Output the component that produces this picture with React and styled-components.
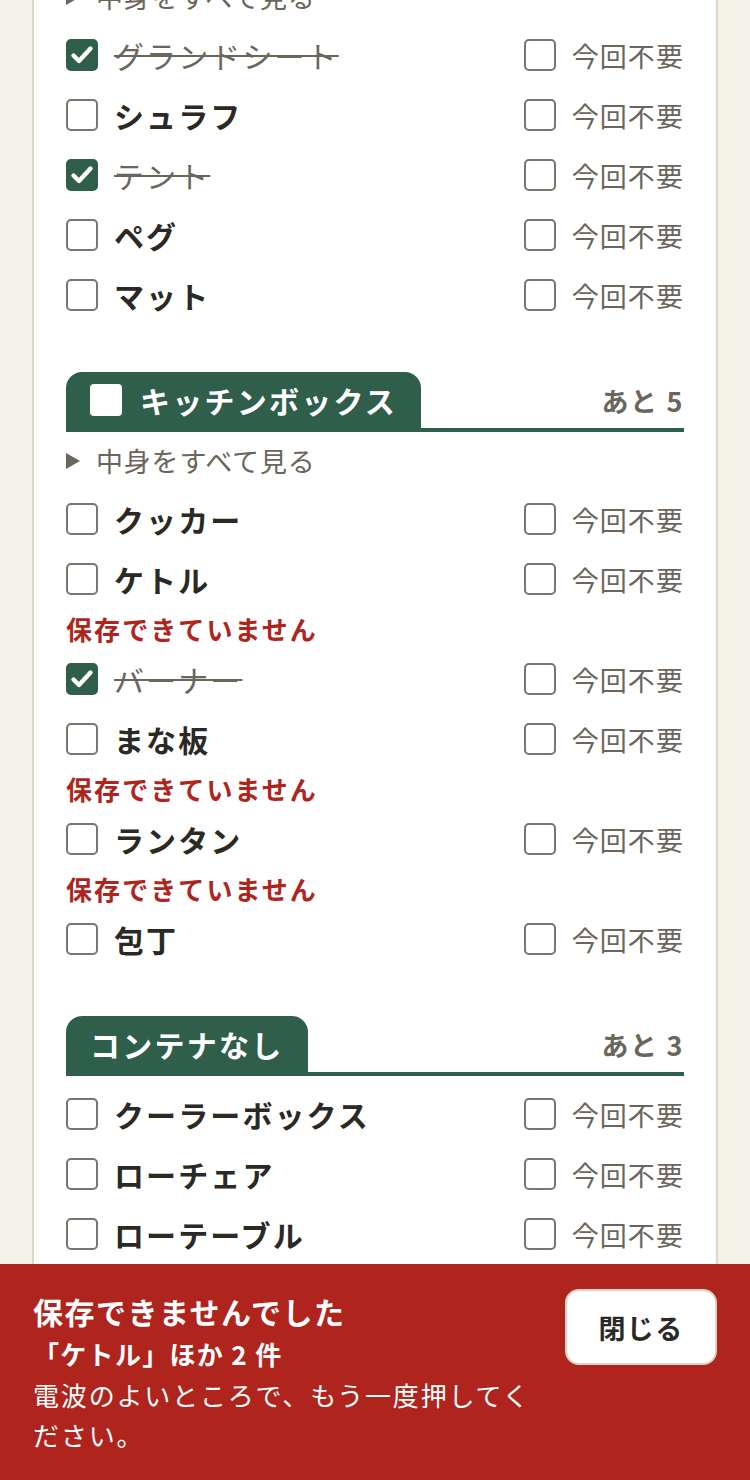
import styled, { createGlobalStyle } from "styled-components";

const GlobalStyle = createGlobalStyle`
  body {
    margin: 0;
    background: #f4f1e9;
    font-family: "Noto Sans CJK JP", "Noto Sans", sans-serif;
  }
`;

const green = "#2f5e4a";
const grey = "#6b665c";
const red = "#b0241e";

const Page = styled.div`
  padding: 0 32px;
`;

const Card = styled.div`
  margin-top: -124px;
  background: #fff;
  border-left: 2px solid #ddd8cb;
  border-right: 2px solid #ddd8cb;
  padding: 32px 32px 260px;
  display: flex;
  flex-direction: column;
  gap: 47px;
`;

const Section = styled.section`
  display: flex;
  flex-direction: column;
`;

const Header = styled.div`
  display: flex;
  align-items: center;
  justify-content: space-between;
  border-bottom: 4px solid ${green};
  margin-bottom: 8px;
`;

const Tab = styled.div`
  height: 56px;
  display: flex;
  align-items: center;
  gap: 18px;
  padding: 0 24px;
  background: ${green};
  border-radius: 16px 16px 0 0;
  color: #fff;
  font-size: 30px;
  font-weight: 700;
  letter-spacing: 0.075em;
`;

const TabBox = styled.span`
  width: 32px;
  height: 32px;
  border-radius: 4px;
  background: #fff;
`;

const Remaining = styled.span`
  color: ${grey};
  font-size: 27px;
  font-weight: 700;
  letter-spacing: 0.06em;
`;

const Expander = styled.div`
  display: flex;
  align-items: center;
  gap: 16px;
  padding: 4px 0 11px;
  line-height: 34px;
  color: ${grey};
  font-size: 27px;
  letter-spacing: 0.03em;
`;

const Triangle = styled.span`
  width: 0;
  height: 0;
  border-top: 8px solid transparent;
  border-bottom: 8px solid transparent;
  border-left: 14px solid ${grey};
`;

const Row = styled.div`
  height: 60px;
  display: flex;
  align-items: center;
  justify-content: space-between;
`;

const Label = styled.label`
  display: flex;
  align-items: center;
  gap: 16px;
`;

const Box = styled.span`
  box-sizing: border-box;
  width: 32px;
  height: 32px;
  border-radius: 5px;
  border: 2px solid ${(p) => (p.$checked ? green : "#7a766e")};
  background: ${(p) => (p.$checked ? green : "#fff")};
  display: flex;
  align-items: center;
  justify-content: center;
`;

const Name = styled.span`
  font-size: 30px;
  letter-spacing: 0.07em;
  line-height: 1;
  color: ${(p) => (p.$done ? grey : "#2a2926")};
  font-weight: ${(p) => (p.$done ? 400 : 700)};
  text-decoration: ${(p) => (p.$done ? "line-through" : "none")};
  text-decoration-thickness: 2px;
`;

const Skip = styled.span`
  font-size: 27px;
  color: ${grey};
  letter-spacing: 0.04em;
  line-height: 1;
`;

const ErrorText = styled.div`
  height: 40px;
  line-height: 40px;
  color: ${red};
  font-size: 26px;
  font-weight: 700;
  letter-spacing: 0.08em;
`;

const Toast = styled.div`
  position: fixed;
  left: 0;
  right: 0;
  bottom: 0;
  height: 216px;
  box-sizing: border-box;
  background: ${red};
  color: #fff;
  padding: 25px 33px;
  display: flex;
  align-items: flex-start;
  gap: 24px;
`;

const ToastBody = styled.div`
  flex: 1;
`;

const ToastTitle = styled.div`
  font-size: 30px;
  font-weight: 700;
  line-height: 44px;
  letter-spacing: 0.05em;
`;

const ToastSub = styled.div`
  font-size: 26px;
  font-weight: 700;
  line-height: 42px;
  letter-spacing: 0.05em;
`;

const ToastText = styled.div`
  font-size: 26px;
  line-height: 40px;
  letter-spacing: 0.07em;
`;

const CloseButton = styled.button`
  flex: none;
  width: 152px;
  height: 76px;
  box-sizing: border-box;
  background: #fff;
  border: 2px solid #d9d3c3;
  border-radius: 14px;
  font-family: inherit;
  font-size: 27px;
  font-weight: 700;
  color: #2a2926;
  letter-spacing: 0.05em;
`;

const Check = () => (
  <svg width="24" height="24" viewBox="0 0 24 24">
    <path d="M3.5 12.5l5.5 5.5L20.5 5.5" fill="none" stroke="#fff" strokeWidth="4.4" strokeLinecap="round" strokeLinejoin="round" />
  </svg>
);

const sections = [
  {
    title: "テントバッグ",
    box: true,
    left: 2,
    expander: true,
    items: [
      { name: "グランドシート", done: true },
      { name: "シュラフ" },
      { name: "テント", done: true },
      { name: "ペグ" },
      { name: "マット" },
    ],
  },
  {
    title: "キッチンボックス",
    box: true,
    left: 5,
    expander: true,
    items: [
      { name: "クッカー" },
      { name: "ケトル", error: true },
      { name: "バーナー", done: true },
      { name: "まな板", error: true },
      { name: "ランタン", error: true },
      { name: "包丁" },
    ],
  },
  {
    title: "コンテナなし",
    left: 3,
    items: [
      { name: "クーラーボックス" },
      { name: "ローチェア" },
      { name: "ローテーブル" },
      { name: "焚き火台" },
    ],
  },
];

const Item = ({ name, done, error }) => (
  <>
    <Row>
      <Label>
        <Box $checked={done}>{done && <Check />}</Box>
        <Name $done={done}>{name}</Name>
      </Label>
      <Label>
        <Box />
        <Skip>今回不要</Skip>
      </Label>
    </Row>
    {error && <ErrorText>保存できていません</ErrorText>}
  </>
);

export default function App() {
  return (
    <Page>
      <GlobalStyle />
      <Card>
        {sections.map((s) => (
          <Section key={s.title}>
            <Header>
              <Tab>
                {s.box && <TabBox />}
                {s.title}
              </Tab>
              <Remaining>あと {s.left}</Remaining>
            </Header>
            {s.expander && (
              <Expander>
                <Triangle />
                中身をすべて見る
              </Expander>
            )}
            {s.items.map((it) => (
              <Item key={it.name} {...it} />
            ))}
          </Section>
        ))}
      </Card>
      <Toast>
        <ToastBody>
          <ToastTitle>保存できませんでした</ToastTitle>
          <ToastSub>「ケトル」ほか 2 件</ToastSub>
          <ToastText>電波のよいところで、もう一度押してください。</ToastText>
        </ToastBody>
        <CloseButton>閉じる</CloseButton>
      </Toast>
    </Page>
  );
}
